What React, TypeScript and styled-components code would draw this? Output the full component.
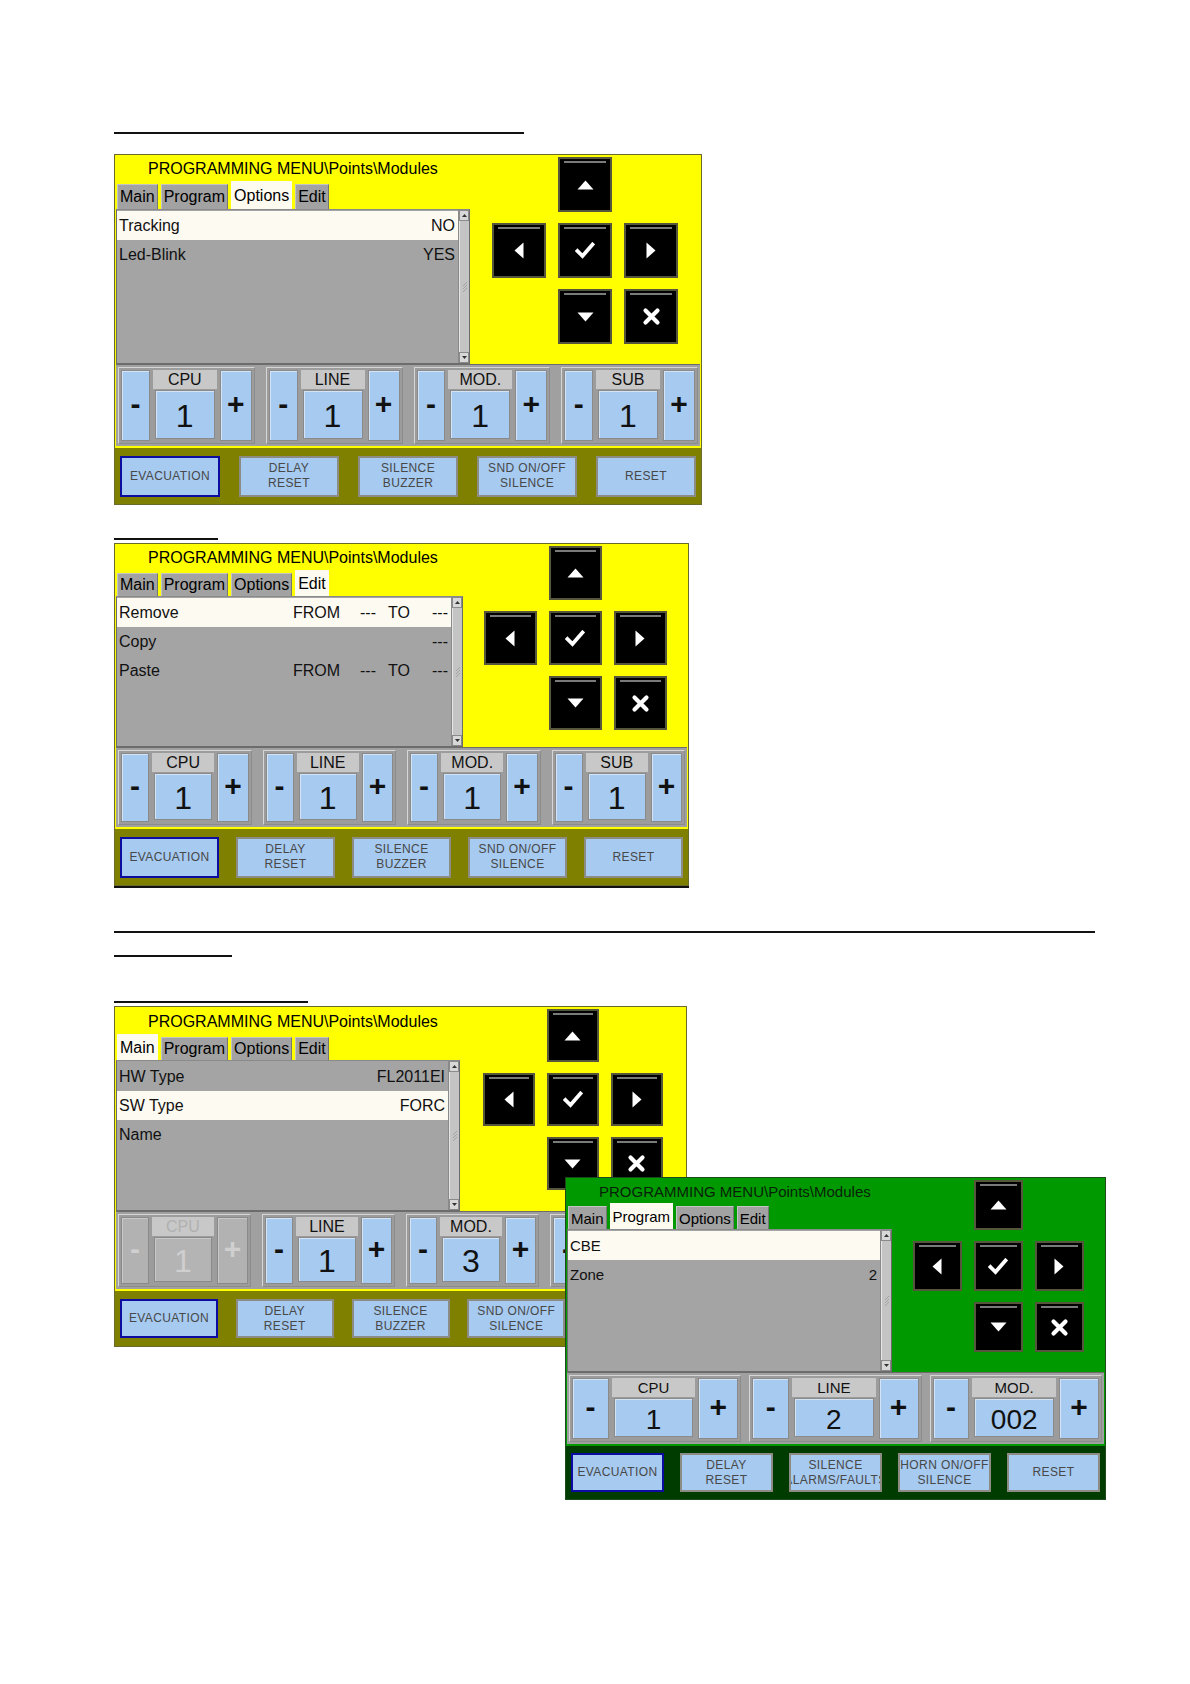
import React from "react"
import styled, { createGlobalStyle } from "styled-components"

const GlobalStyle = createGlobalStyle`
  body {
    margin: 0;
    background: #fff;
    font-family: "Liberation Sans", Arial, sans-serif;
  }
`

const tones = {
  yellow: { screen: "#ffff00", bar: "#808000", frame: "#6a6a2c", title: "#000" },
  green: { screen: "#009a00", bar: "#003c00", frame: "#1d4a1d", title: "#0a1f0a" },
}

type Tone = keyof typeof tones

const Page = styled.div`
  width: 1190px;
  min-height: 1684px;
  box-sizing: border-box;
  padding: 132px 0 0 114px;
`

const Rule = styled.div<{ $w: number; $mt: number }>`
  width: ${(p) => p.$w}px;
  height: 2px;
  margin-top: ${(p) => p.$mt}px;
  background: #111;
`

const Stack = styled.div<{ $mt: number }>`
  position: relative;
  margin-top: ${(p) => p.$mt}px;
`

const Overlay = styled.div`
  position: absolute;
  left: 451px;
  top: 171px;
`

const Frame = styled.div<{ $w: number; $tone: Tone; $fs: number }>`
  width: ${(p) => p.$w}px;
  box-sizing: border-box;
  border: 1px solid ${(p) => tones[p.$tone].frame};
  background: ${(p) => tones[p.$tone].bar};
  font-size: ${(p) => p.$fs}px;
`

const Screen = styled.div<{ $tone: Tone }>`
  background: ${(p) => tones[p.$tone].screen};
  padding: 0 1px 2px;
`

const TopArea = styled.div`
  display: flex;
`

const LeftCol = styled.div<{ $w: number }>`
  width: ${(p) => p.$w}px;
  flex: 0 0 auto;
  display: flex;
  flex-direction: column;
`

const Title = styled.div<{ $h: number; $tone: Tone }>`
  height: ${(p) => p.$h}px;
  line-height: ${(p) => p.$h + 2}px;
  padding-left: 32px;
  color: ${(p) => tones[p.$tone].title};
  white-space: nowrap;
`

const Tabs = styled.div<{ $h: number }>`
  height: ${(p) => p.$h}px;
  display: flex;
  align-items: flex-end;
  gap: 3px;
  padding-left: 1px;
`

const Tab = styled.div<{ $active?: boolean }>`
  height: ${(p) => (p.$active ? "100%" : "calc(100% - 3px)")};
  box-sizing: border-box;
  padding: 0 2px;
  display: flex;
  align-items: center;
  color: #000;
  background: ${(p) => (p.$active ? "#fdfaf0" : "#a2a2a2")};
  border-top: 1px solid ${(p) => (p.$active ? "#fdfaf0" : "#c4c4c4")};
  border-left: 1px solid ${(p) => (p.$active ? "#fdfaf0" : "#c4c4c4")};
  border-right: 1px solid ${(p) => (p.$active ? "#fdfaf0" : "#777")};
`

const ListBox = styled.div<{ $h: number }>`
  height: ${(p) => p.$h}px;
  box-sizing: border-box;
  display: flex;
  background: #a4a4a4;
  border: 1px solid #6c6c6c;
  border-top-color: #8a8a8a;
`

const Rows = styled.div`
  flex: 1;
  padding-top: 1px;
`

const ListRow = styled.div<{ $active?: boolean; $cols: string }>`
  height: 29px;
  display: grid;
  grid-template-columns: ${(p) => p.$cols};
  align-items: center;
  padding: 0 3px 0 2px;
  color: #111;
  background: ${(p) => (p.$active ? "#fdfaf2" : "transparent")};
  white-space: nowrap;
`

const Cell = styled.span<{ $right?: boolean }>`
  text-align: ${(p) => (p.$right ? "right" : "left")};
`

const Scroll = styled.div`
  width: 10px;
  flex: 0 0 auto;
  display: flex;
  flex-direction: column;
  background: #c4c4c4;
  border-left: 1px solid #8a8a8a;
`

const ScrollArrow = styled.div`
  height: 11px;
  display: flex;
  align-items: center;
  justify-content: center;
  background: #d8d8d8;
  border: 1px solid #8a8a8a;
  box-sizing: border-box;
`

const ScrollTrack = styled.div`
  flex: 1;
  display: flex;
  align-items: center;
  justify-content: center;
  border-left: 1px solid #e6e6e6;
`

const NavPad = styled.div<{ $size: number; $gap: number }>`
  flex: 1;
  display: grid;
  grid-template-columns: repeat(3, ${(p) => p.$size}px);
  grid-auto-rows: ${(p) => p.$size + 1}px;
  gap: ${(p) => p.$gap - 1}px ${(p) => p.$gap}px;
  justify-content: center;
  align-content: start;
  padding-top: 2px;
`

const NavButton = styled.div`
  position: relative;
  box-sizing: border-box;
  background: #000;
  border: 2px solid #56563c;
  display: flex;
  align-items: center;
  justify-content: center;

  &::before {
    content: "";
    position: absolute;
    top: 2px;
    left: 4px;
    right: 4px;
    height: 2px;
    background: #7a7a7a;
  }
`

const NavSpacer = styled.div``

const CounterRow = styled.div<{ $h: number; $gap: number }>`
  height: ${(p) => p.$h}px;
  box-sizing: border-box;
  display: flex;
  gap: ${(p) => p.$gap}px;
  padding: 2px;
  background: #a0a0a0;
  border-top: 1px solid #6c6c6c;
`

const CounterGroup = styled.div<{ $cols: string }>`
  flex: 1;
  display: grid;
  grid-template-columns: ${(p) => p.$cols};
  grid-template-rows: 19px 1fr;
  column-gap: 3px;
  padding: 2px;
  border: 1px solid #d6d6d6;
  border-right-color: #8c8c8c;
  border-bottom-color: #8c8c8c;
  background: #9c9c9c;
`

const StepButton = styled.div<{ $off?: boolean; $col: number }>`
  grid-column: ${(p) => p.$col};
  grid-row: 1 / span 2;
  display: flex;
  align-items: center;
  justify-content: center;
  padding-bottom: 4px;
  font-size: 30px;
  font-weight: bold;
  color: ${(p) => (p.$off ? "#cfcfcf" : "#111")};
  background: ${(p) => (p.$off ? "#b2b2b2" : "#a6caf0")};
  border: 1px solid #8a8a8a;
  box-shadow: inset 1px 1px 0 ${(p) => (p.$off ? "#c8c8c8" : "#d4e4f6")};
`

const CounterLabel = styled.div<{ $off?: boolean }>`
  grid-column: 2;
  grid-row: 1;
  display: flex;
  align-items: center;
  justify-content: center;
  color: ${(p) => (p.$off ? "#b0b0b0" : "#111")};
  background: #c8c8c8;
`

const CounterValue = styled.div<{ $off?: boolean; $fs: number }>`
  grid-column: 2;
  grid-row: 2;
  margin: 1px 2px 2px;
  display: flex;
  align-items: center;
  justify-content: center;
  padding-top: 4px;
  font-size: ${(p) => p.$fs}px;
  color: ${(p) => (p.$off ? "#cfcfcf" : "#111")};
  background: ${(p) => (p.$off ? "#b4b4b4" : "#a6caf0")};
  border: 1px solid #8a8a8a;
  box-shadow: inset 1px 1px 0 ${(p) => (p.$off ? "#c8c8c8" : "#d4e4f6")};
`

const ActionBar = styled.div<{ $h: number }>`
  height: ${(p) => p.$h}px;
  display: flex;
  align-items: center;
  justify-content: space-between;
  padding: 0 5px;
`

const ActionButton = styled.div<{ $w: number; $h: number; $primary?: boolean }>`
  width: ${(p) => p.$w}px;
  height: ${(p) => p.$h}px;
  box-sizing: border-box;
  display: flex;
  flex-direction: column;
  align-items: center;
  justify-content: center;
  font-size: 12px;
  line-height: 15px;
  letter-spacing: 0.4px;
  color: #484848;
  background: #a6caf0;
  border: ${(p) => (p.$primary ? "2px solid #0c0ca0" : "2px solid #8c8c84")};
  white-space: nowrap;
  overflow: hidden;
`

const icons: Record<string, React.ReactNode> = {
  up: (
    <svg width="17" height="10" viewBox="0 0 17 10">
      <path d="M8.5 0.5 L16.5 9.5 L0.5 9.5 Z" fill="#fff" />
    </svg>
  ),
  down: (
    <svg width="17" height="10" viewBox="0 0 17 10">
      <path d="M0.5 0.5 L16.5 0.5 L8.5 9.5 Z" fill="#fff" />
    </svg>
  ),
  left: (
    <svg width="10" height="17" viewBox="0 0 10 17">
      <path d="M9.5 0.5 L9.5 16.5 L0.5 8.5 Z" fill="#fff" />
    </svg>
  ),
  right: (
    <svg width="10" height="17" viewBox="0 0 10 17">
      <path d="M0.5 0.5 L9.5 8.5 L0.5 16.5 Z" fill="#fff" />
    </svg>
  ),
  ok: (
    <svg width="20" height="17" viewBox="0 0 20 17">
      <path d="M2.5 9 L7.5 14 L17.5 2.5" fill="none" stroke="#fff" strokeWidth="3.8" strokeLinecap="square" />
    </svg>
  ),
  cancel: (
    <svg width="19" height="19" viewBox="0 0 19 19">
      <path d="M3.5 3.5 L15.5 15.5 M15.5 3.5 L3.5 15.5" fill="none" stroke="#fff" strokeWidth="4.2" strokeLinecap="round" />
    </svg>
  ),
}

const navLayout = ["", "up", "", "left", "ok", "right", "", "down", "cancel"]

type Row = { cells: string[]; active?: boolean }
type Counter = { label: string; value: string; off?: boolean }

type PanelProps = {
  tone: Tone
  width: number
  fontSize: number
  valueSize: number
  leftW: number
  titleH: number
  tabH: number
  listH: number
  counterH: number
  barH: number
  navSize: number
  navGap: number
  activeTab: number
  rows: Row[]
  rowCols: string
  counters: Counter[]
  stepCols: string
  counterGap: number
  actions: string[][]
  actionW: number
  actionH: number
}

const tabNames = ["Main", "Program", "Options", "Edit"]

const Panel = (p: PanelProps) => (
  <Frame $w={p.width} $tone={p.tone} $fs={p.fontSize}>
    <Screen $tone={p.tone}>
      <TopArea>
        <LeftCol $w={p.leftW}>
          <Title $h={p.titleH} $tone={p.tone}>
            PROGRAMMING MENU\Points\Modules
          </Title>
          <Tabs $h={p.tabH}>
            {tabNames.map((t, i) => (
              <Tab key={t} $active={i === p.activeTab}>
                {t}
              </Tab>
            ))}
          </Tabs>
          <ListBox $h={p.listH}>
            <Rows>
              {p.rows.map((r, i) => (
                <ListRow key={i} $active={r.active} $cols={p.rowCols}>
                  {r.cells.map((c, j) => (
                    <Cell key={j} $right={j === r.cells.length - 1 && j > 0}>
                      {c}
                    </Cell>
                  ))}
                </ListRow>
              ))}
            </Rows>
            <Scroll>
              <ScrollArrow>
                <svg width="5" height="3" viewBox="0 0 5 3">
                  <path d="M2.5 0 L5 3 L0 3 Z" fill="#333" />
                </svg>
              </ScrollArrow>
              <ScrollTrack>
                <svg width="6" height="12" viewBox="0 0 6 12">
                  <path d="M1 5 L5 1 M1 8 L5 4 M1 11 L5 7" stroke="#999" strokeWidth="0.8" />
                </svg>
              </ScrollTrack>
              <ScrollArrow>
                <svg width="5" height="3" viewBox="0 0 5 3">
                  <path d="M0 0 L5 0 L2.5 3 Z" fill="#333" />
                </svg>
              </ScrollArrow>
            </Scroll>
          </ListBox>
        </LeftCol>
        <NavPad $size={p.navSize} $gap={p.navGap}>
          {navLayout.map((k, i) =>
            k ? <NavButton key={i}>{icons[k]}</NavButton> : <NavSpacer key={i} />
          )}
        </NavPad>
      </TopArea>
      <CounterRow $h={p.counterH} $gap={p.counterGap}>
        {p.counters.map((c) => (
          <CounterGroup key={c.label} $cols={p.stepCols}>
            <StepButton $off={c.off} $col={1}>-</StepButton>
            <CounterLabel $off={c.off}>{c.label}</CounterLabel>
            <CounterValue $off={c.off} $fs={p.valueSize}>{c.value}</CounterValue>
            <StepButton $off={c.off} $col={3}>+</StepButton>
          </CounterGroup>
        ))}
      </CounterRow>
    </Screen>
    <ActionBar $h={p.barH}>
      {p.actions.map((lines, i) => (
        <ActionButton key={i} $w={p.actionW} $h={p.actionH} $primary={i === 0}>
          {lines.map((l) => (
            <span key={l}>{l}</span>
          ))}
        </ActionButton>
      ))}
    </ActionBar>
  </Frame>
)

const four = (cpuOff = false, mod = "1"): Counter[] => [
  { label: "CPU", value: "1", off: cpuOff },
  { label: "LINE", value: "1" },
  { label: "MOD.", value: mod },
  { label: "SUB", value: "1" },
]

const yellowActions = [["EVACUATION"], ["DELAY", "RESET"], ["SILENCE", "BUZZER"], ["SND ON/OFF", "SILENCE"], ["RESET"]]
const greenActions = [["EVACUATION"], ["DELAY", "RESET"], ["SILENCE", "ALARMS/FAULTS"], ["HORN ON/OFF", "SILENCE"], ["RESET"]]

export default function App() {
  return (
    <>
      <GlobalStyle />
      <Page>
        <Rule $w={410} $mt={0} />
        <Stack $mt={20}>
          <Panel
            tone="yellow"
            width={588}
            fontSize={16}
            valueSize={32}
            leftW={354}
            titleH={26}
            tabH={28}
            listH={155}
            counterH={82}
            barH={56}
            navSize={54}
            navGap={12}
            activeTab={2}
            rowCols="1fr auto"
            rows={[
              { cells: ["Tracking", "NO"], active: true },
              { cells: ["Led-Blink", "YES"] },
            ]}
            counters={four()}
            stepCols="27fr 60fr 30fr"
            counterGap={11}
            actions={yellowActions}
            actionW={100}
            actionH={41}
          />
        </Stack>
        <Rule $w={104} $mt={33} />
        <Stack $mt={3}>
          <Panel
            tone="yellow"
            width={575}
            fontSize={16}
            valueSize={32}
            leftW={347}
            titleH={26}
            tabH={26}
            listH={151}
            counterH={80}
            barH={56}
            navSize={53}
            navGap={12}
            activeTab={3}
            rowCols="174px 67px 28px 43px 1fr"
            rows={[
              { cells: ["Remove", "FROM", "---", "TO", "---"], active: true },
              { cells: ["Copy", "", "", "", "---"] },
              { cells: ["Paste", "FROM", "---", "TO", "---"] },
            ]}
            counters={four()}
            stepCols="27fr 60fr 30fr"
            counterGap={11}
            actions={yellowActions}
            actionW={99}
            actionH={41}
          />
        </Stack>
        <Rule $w={575} $mt={0} />
        <Rule $w={981} $mt={43} />
        <Rule $w={118} $mt={22} />
        <Rule $w={194} $mt={44} />
        <Stack $mt={3}>
          <Panel
            tone="yellow"
            width={573}
            fontSize={16}
            valueSize={32}
            leftW={344}
            titleH={27}
            tabH={26}
            listH={151}
            counterH={78}
            barH={55}
            navSize={52}
            navGap={12}
            activeTab={0}
            rowCols="1fr auto"
            rows={[
              { cells: ["HW Type", "FL2011EI"] },
              { cells: ["SW Type", "FORC"], active: true },
              { cells: ["Name", ""] },
            ]}
            counters={four(true, "3")}
            stepCols="27fr 60fr 30fr"
            counterGap={11}
            actions={yellowActions}
            actionW={98}
            actionH={39}
          />
          <Overlay>
            <Panel
              tone="green"
              width={541}
              fontSize={15}
              valueSize={28}
              leftW={325}
              titleH={25}
              tabH={26}
              listH={143}
              counterH={72}
              barH={53}
              navSize={49}
              navGap={12}
              activeTab={1}
              rowCols="1fr auto"
              rows={[
                { cells: ["CBE", ""], active: true },
                { cells: ["Zone", "2"] },
              ]}
              counters={[
                { label: "CPU", value: "1" },
                { label: "LINE", value: "2" },
                { label: "MOD.", value: "002" },
              ]}
              stepCols="34fr 77fr 37fr"
              counterGap={8}
              actions={greenActions}
              actionW={93}
              actionH={39}
            />
          </Overlay>
        </Stack>
      </Page>
    </>
  )
}
